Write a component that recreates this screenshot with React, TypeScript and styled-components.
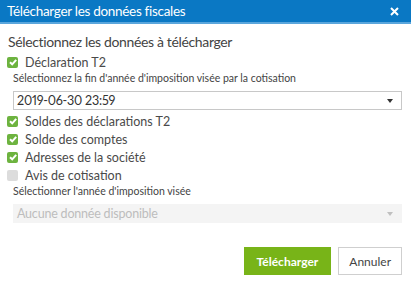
import styled, { createGlobalStyle } from "styled-components";

const GlobalStyle = createGlobalStyle`
  html, body {
    margin: 0;
    padding: 0;
    background: #ffffff;
  }
  body {
    font-family: Lato, "Open Sans", sans-serif;
    color: #333333;
  }
`;

const items = [
  { label: "Soldes des déclarations T2", checked: true },
  { label: "Solde des comptes", checked: true },
  { label: "Adresses de la société", checked: true },
  { label: "Avis de cotisation", checked: false },
];

export default function App() {
  return (
    <Dialog>
      <GlobalStyle />
      <Header>
        <Title>Télécharger les données fiscales</Title>
        <Close aria-label="Fermer">
          <svg width="9" height="9" viewBox="0 0 9 9">
            <path d="M1 1 L8 8 M8 1 L1 8" stroke="#ffffff" strokeWidth="2" />
          </svg>
        </Close>
      </Header>
      <Body>
        <Heading>Sélectionnez les données à télécharger</Heading>
        <CheckRow>
          <Box $checked>
            <CheckMark />
          </Box>
          <CheckLabel>Déclaration T2</CheckLabel>
        </CheckRow>
        <Indented>
          <FieldLabel>Sélectionnez la fin d'année d'imposition visée par la cotisation</FieldLabel>
          <Select>
            <SelectValue>2019-06-30 23:59</SelectValue>
            <Caret />
          </Select>
        </Indented>
        {items.map((it) => (
          <CheckRow key={it.label}>
            <Box $checked={it.checked}>{it.checked && <CheckMark />}</Box>
            <CheckLabel>{it.label}</CheckLabel>
          </CheckRow>
        ))}
        <Indented>
          <FieldLabel>Sélectionner l'année d'imposition visée</FieldLabel>
          <Select $disabled>
            <SelectValue>Aucune donnée disponible</SelectValue>
            <Caret $disabled />
          </Select>
        </Indented>
        <Footer>
          <Button $primary>Télécharger</Button>
          <Button>Annuler</Button>
        </Footer>
      </Body>
    </Dialog>
  );
}

function CheckMark() {
  return (
    <svg width="10" height="10" viewBox="0 0 10 10">
      <path d="M2 5.2 L4.2 7.3 L8.2 2.8" fill="none" stroke="#ffffff" strokeWidth="2" />
    </svg>
  );
}

const Dialog = styled.div`
  width: 411px;
  height: 286px;
  display: flex;
  flex-direction: column;
  background: #ffffff;
`;

const Header = styled.div`
  height: 22px;
  background: #0a78c4;
  border-bottom: 2px solid #5aa6dc;
  display: flex;
  align-items: center;
  justify-content: space-between;
  padding: 0 12px 0 7px;
`;

const Title = styled.div`
  color: #ffffff;
  font-size: 13.5px;
  letter-spacing: -0.3px;
`;

const Close = styled.div`
  display: flex;
  align-items: center;
`;

const Body = styled.div`
  display: flex;
  flex-direction: column;
  padding: 8px 9px 0 8px;
`;

const Heading = styled.div`
  font-size: 14px;
  letter-spacing: -0.35px;
  color: #444444;
  line-height: 20px;
  margin-bottom: 1px;
`;

const CheckRow = styled.div`
  display: flex;
  align-items: center;
  height: 18px;
  gap: 7px;
  margin-left: -1px;
`;

const Box = styled.div<{ $checked?: boolean }>`
  width: 11px;
  height: 11px;
  border-radius: 2px;
  background: ${(p) => (p.$checked ? "#6db33f" : "#dcdcdc")};
  display: flex;
  align-items: center;
  justify-content: center;
`;

const CheckLabel = styled.span`
  font-size: 12.5px;
  color: #4a4a4a;
`;

const Indented = styled.div`
  display: flex;
  flex-direction: column;
  padding-left: 5px;
  margin-bottom: 2px;
`;

const FieldLabel = styled.div`
  font-size: 10.5px;
  color: #444444;
  line-height: 16px;
  margin-top: -1px;
`;

const Select = styled.div<{ $disabled?: boolean }>`
  height: 19px;
  margin-top: 5px;
  box-sizing: border-box;
  border: 1px solid ${(p) => (p.$disabled ? "#f4f4f4" : "#c8c8c8")};
  background: ${(p) => (p.$disabled ? "#f4f4f4" : "#ffffff")};
  color: ${(p) => (p.$disabled ? "#bdbdbd" : "#333333")};
  display: flex;
  align-items: center;
  justify-content: space-between;
  padding: 0 8px 0 3px;
`;

const SelectValue = styled.span`
  font-size: 12.5px;
  font-feature-settings: "pnum";
  letter-spacing: -0.2px;
`;

const Caret = styled.div<{ $disabled?: boolean }>`
  width: 0;
  height: 0;
  border-left: 3px solid transparent;
  border-right: 3px solid transparent;
  border-top: 4px solid ${(p) => (p.$disabled ? "#c0c0c0" : "#333333")};
`;

const Footer = styled.div`
  display: flex;
  justify-content: flex-end;
  gap: 7px;
  margin-top: 22px;
`;

const Button = styled.button<{ $primary?: boolean }>`
  height: 28px;
  box-sizing: border-box;
  padding: 0 ${(p) => (p.$primary ? "12px" : "10px")};
  font-family: Lato, sans-serif;
  font-size: 12px;
  font-weight: ${(p) => (p.$primary ? 700 : 400)};
  color: ${(p) => (p.$primary ? "#ffffff" : "#444444")};
  background: ${(p) => (p.$primary ? "#78b418" : "#ffffff")};
  border: 1px solid ${(p) => (p.$primary ? "#78b418" : "#cfcfcf")};
  border-radius: 0;
`;
